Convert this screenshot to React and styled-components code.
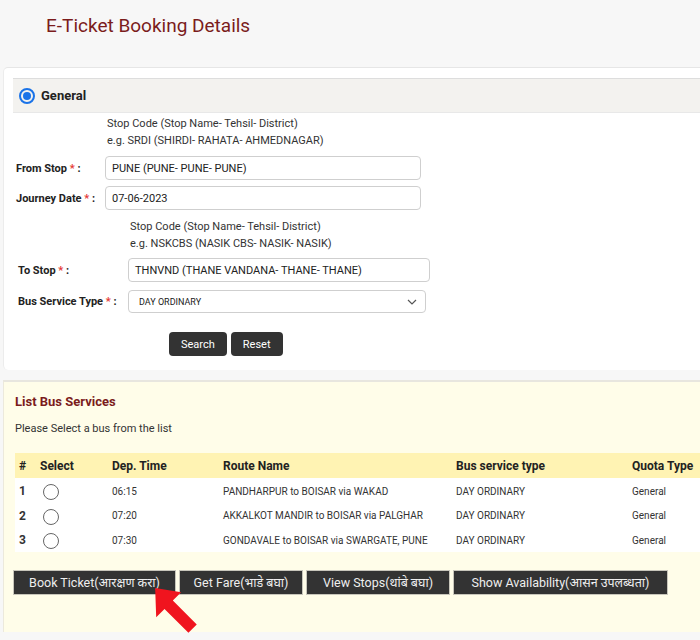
import React from "react";
import styled, { createGlobalStyle } from "styled-components";

const GlobalStyle = createGlobalStyle`
  body {
    margin: 0;
    background: #f7f7f7;
    font-family: Roboto, "Noto Sans", "Liberation Sans", sans-serif;
    color: #222;
  }
`;

const Page = styled.div`
  width: 700px;
  height: 640px;
  overflow: hidden;
`;

const Title = styled.h1`
  margin: 0;
  height: 67px;
  padding: 14px 0 0 46px;
  box-sizing: border-box;
  font-size: 19px;
  font-weight: 400;
  color: #7b1c1c;
`;

const Card = styled.div`
  margin-left: 3px;
  height: 303px;
  background: #fff;
  border-top: 1px solid #e6e6e6;
  border-left: 1px solid #ececec;
  border-radius: 5px 0 0 5px;
  box-sizing: border-box;
  padding-top: 10px;
`;

const GeneralBar = styled.div`
  margin-left: 9px;
  height: 35px;
  background: #f3f2ef;
  border-top: 1px solid #ddd;
  border-bottom: 1px solid #e8e8e8;
  box-sizing: border-box;
  display: flex;
  align-items: center;
  gap: 6px;
  padding-left: 6px;
  font-size: 13px;
  font-weight: 700;
  color: #222;
`;

const RadioOn = styled.span`
  width: 16px;
  height: 16px;
  border-radius: 50%;
  border: 2px solid #1a73e8;
  box-sizing: border-box;
  display: flex;
  align-items: center;
  justify-content: center;
  &::after {
    content: "";
    width: 8px;
    height: 8px;
    border-radius: 50%;
    background: #1a73e8;
  }
`;

const Hint = styled.div`
  padding-left: ${(p) => p.$left}px;
  padding-top: ${(p) => p.$top}px;
  font-size: 11px;
  line-height: 17px;
  color: #333;
`;

const Row = styled.div`
  display: flex;
  align-items: center;
  margin-top: ${(p) => p.$top}px;
  padding-left: ${(p) => p.$left}px;
`;

const Label = styled.div`
  width: ${(p) => p.$w}px;
  font-size: 11px;
  font-weight: 700;
  color: #222;
  span {
    color: #e53935;
  }
`;

const Field = styled.div`
  width: ${(p) => p.$w}px;
  height: ${(p) => p.$h || 24}px;
  box-sizing: border-box;
  border: 1px solid #cfcfcf;
  border-radius: 4px;
  display: flex;
  align-items: center;
  justify-content: space-between;
  padding: 0 8px 0 ${(p) => p.$pad || 6}px;
  font-size: ${(p) => p.$fs || 11}px;
  color: #222;
`;

const ButtonRow = styled.div`
  display: flex;
  gap: 4px;
  margin: 19px 0 0 165px;
`;

const DarkButton = styled.button`
  height: 24px;
  padding: 0 ${(p) => p.$px}px;
  background: #333;
  color: #fff;
  border: none;
  border-radius: 4px;
  font-family: inherit;
  font-size: 11px;
`;

const Panel = styled.div`
  position: relative;
  margin: 10px 0 0 3px;
  height: 252px;
  background: #fffde9;
  border-top: 2px solid #e8e6df;
  border-left: 1px solid #ece9dc;
  box-sizing: border-box;
  padding: 11px 0 0 11px;
`;

const PanelTitle = styled.h2`
  margin: 0;
  font-size: 13px;
  font-weight: 700;
  color: #7b1c1c;
  line-height: 18px;
`;

const Note = styled.div`
  margin-top: 11px;
  font-size: 11px;
  line-height: 14px;
  color: #333;
`;

const Table = styled.div`
  margin-top: 17px;
  display: grid;
  grid-template-columns: 25px 72px 111px 233px 176px 1fr;
`;

const HeadCell = styled.div`
  height: 25px;
  background: #fff3b3;
  display: flex;
  align-items: center;
  padding-left: ${(p) => p.$pl || 0}px;
  font-size: 12px;
  font-weight: 700;
  color: #222;
  white-space: nowrap;
`;

const Cell = styled.div`
  height: 24.5px;
  background: #fff;
  display: flex;
  align-items: center;
  padding-left: ${(p) => p.$pl || 0}px;
  padding-top: 2px;
  box-sizing: border-box;
  font-size: ${(p) => (p.$bold ? 12 : 10)}px;
  font-weight: ${(p) => (p.$bold ? 700 : 400)};
  color: #333;
  white-space: nowrap;
`;

const RadioOff = styled.span`
  width: 16px;
  height: 16px;
  margin: 2px 0 0 3px;
  border-radius: 50%;
  border: 1px solid #666;
  box-sizing: border-box;
  background: #fff;
`;

const ActionRow = styled.div`
  display: flex;
  gap: 3px;
  margin: 18px 0 0 -2px;
`;

const ActionButton = styled.button`
  width: ${(p) => p.$w}px;
  height: 25px;
  padding: 0;
  background: #333;
  color: #eee;
  border: 1px solid #c8c6bb;
  font-family: Roboto, "Noto Sans", "Noto Sans Devanagari", "Lohit Devanagari", sans-serif;
  font-size: 12.5px;
  white-space: nowrap;
`;

const Arrow = styled.svg`
  position: absolute;
  left: 147px;
  top: 204px;
`;

const Chevron = () => (
  <svg width="10" height="6" viewBox="0 0 10 6">
    <path d="M1 1 L5 5 L9 1" fill="none" stroke="#555" strokeWidth="1.2" />
  </svg>
);

const rows = [
  ["1", "06:15", "PANDHARPUR to BOISAR via WAKAD"],
  ["2", "07:20", "AKKALKOT MANDIR to BOISAR via PALGHAR"],
  ["3", "07:30", "GONDAVALE to BOISAR via SWARGATE, PUNE"],
];

const actions = [
  ["Book Ticket(आरक्षण करा)", 163],
  ["Get Fare(भाडे बघा)", 124],
  ["View Stops(थांबे  बघा)", 144],
  ["Show Availability(आसन  उपलब्धता)", 215],
];

export default function App() {
  return (
    <Page>
      <GlobalStyle />
      <Title>E-Ticket Booking Details</Title>
      <Card>
        <GeneralBar>
          <RadioOn />
          General
        </GeneralBar>
        <Hint $left={103} $top={2}>
          Stop Code (Stop Name- Tehsil- District)
          <br />
          e.g. SRDI (SHIRDI- RAHATA- AHMEDNAGAR)
        </Hint>
        <Row $top={7} $left={12}>
          <Label $w={89}>From Stop <span>*</span> :</Label>
          <Field $w={316}>PUNE (PUNE- PUNE- PUNE)</Field>
        </Row>
        <Row $top={6} $left={12}>
          <Label $w={89}>Journey Date <span>*</span> :</Label>
          <Field $w={316}>07-06-2023</Field>
        </Row>
        <Hint $left={126} $top={8}>
          Stop Code (Stop Name- Tehsil- District)
          <br />
          e.g. NSKCBS (NASIK CBS- NASIK- NASIK)
        </Hint>
        <Row $top={6} $left={14}>
          <Label $w={110}>To Stop <span>*</span> :</Label>
          <Field $w={302}>THNVND (THANE VANDANA- THANE- THANE)</Field>
        </Row>
        <Row $top={8} $left={14}>
          <Label $w={110}>Bus Service Type <span>*</span> :</Label>
          <Field $w={298} $h={23} $fs={9} $pad={10}>
            DAY ORDINARY
            <Chevron />
          </Field>
        </Row>
        <ButtonRow>
          <DarkButton $px={12}>Search</DarkButton>
          <DarkButton $px={12}>Reset</DarkButton>
        </ButtonRow>
      </Card>
      <Panel>
        <PanelTitle>List Bus Services</PanelTitle>
        <Note>Please Select a bus from the list</Note>
        <Table>
          <HeadCell $pl={4}>#</HeadCell>
          <HeadCell>Select</HeadCell>
          <HeadCell>Dep. Time</HeadCell>
          <HeadCell>Route Name</HeadCell>
          <HeadCell>Bus service type</HeadCell>
          <HeadCell>Quota Type</HeadCell>
          {rows.map(([n, t, r]) => (
            <React.Fragment key={n}>
              <Cell $pl={4} $bold>{n}</Cell>
              <Cell><RadioOff /></Cell>
              <Cell>{t}</Cell>
              <Cell>{r}</Cell>
              <Cell>DAY ORDINARY</Cell>
              <Cell>General</Cell>
            </React.Fragment>
          ))}
        </Table>
        <ActionRow>
          {actions.map(([label, w]) => (
            <ActionButton key={label} $w={w}>{label}</ActionButton>
          ))}
        </ActionRow>
        <Arrow width="52" height="52" viewBox="0 0 50 50">
          <path
            d="M4 2 L29 6 L21 14 L44 37 L36 45 L13 22 L5 30 Z"
            fill="#f0141e"
          />
        </Arrow>
      </Panel>
    </Page>
  );
}
